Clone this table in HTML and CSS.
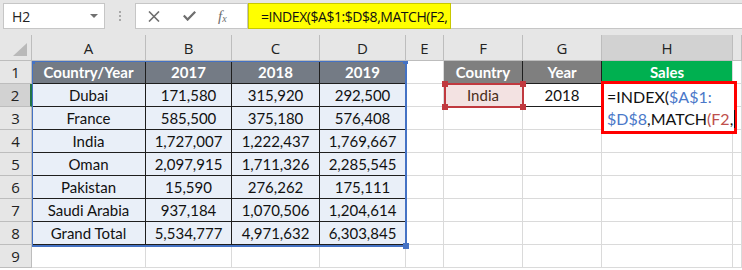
FILE: index.html
```html
<!DOCTYPE html>
<html>
<head>
<meta charset="utf-8">
<link rel="stylesheet" href="styles.css">
</head>
<body>
<div class="app">
  <div class="toolbar">
    <div class="namebox"><span>H2</span><span class="dd"></span></div>
    <div class="grip"><i></i><i></i><i></i></div>
    <div class="fbtns">
      <svg class="ic" width="12" height="11" viewBox="0 0 12 11"><path d="M1 0.5L11 10.5M11 0.5L1 10.5" stroke="#6e6e6e" stroke-width="1.6" fill="none"/></svg>
      <svg class="ic" width="13" height="10" viewBox="0 0 13 10"><path d="M0.8 4.6L4.6 8.6L12.2 0.8" stroke="#6e6e6e" stroke-width="2.2" fill="none"/></svg>
      <span class="fx">f<sub>x</sub></span>
    </div>
    <div class="fbar">
      <div class="fyellow">=INDEX($A$1:$D$8,MATCH(F2,</div>
      <div class="frest"></div>
    </div>
  </div>
  <div class="sheet">
    <div class="corner"><span class="tri"></span></div>
    <div class="ch">A</div><div class="ch">B</div><div class="ch">C</div><div class="ch">D</div><div class="ch">E</div><div class="ch">F</div><div class="ch">G</div><div class="ch active">H</div><div class="ch"></div>

    <div class="rh">1</div>
    <div class="c th">Country/Year</div><div class="c th">2017</div><div class="c th">2018</div><div class="c th">2019</div>
    <div class="c"></div><div class="c th2">Country</div><div class="c th2 gh">Year</div><div class="c th3">Sales</div><div class="c"></div>

    <div class="rh active">2</div>
    <div class="c td">Dubai</div><div class="c td">171,580</div><div class="c td">315,920</div><div class="c td">292,500</div>
    <div class="c"></div><div class="c lookup">India</div><div class="c yr">2018</div><div class="c"></div><div class="c"></div>

    <div class="rh">3</div>
    <div class="c td">France</div><div class="c td">585,500</div><div class="c td">375,180</div><div class="c td">576,408</div>
    <div class="c"></div><div class="c"></div><div class="c"></div><div class="c"></div><div class="c"></div>

    <div class="rh">4</div>
    <div class="c td">India</div><div class="c td">1,727,007</div><div class="c td">1,222,437</div><div class="c td">1,769,667</div>
    <div class="c"></div><div class="c"></div><div class="c"></div><div class="c"></div><div class="c"></div>

    <div class="rh">5</div>
    <div class="c td">Oman</div><div class="c td">2,097,915</div><div class="c td">1,711,326</div><div class="c td">2,285,545</div>
    <div class="c"></div><div class="c"></div><div class="c"></div><div class="c"></div><div class="c"></div>

    <div class="rh">6</div>
    <div class="c td">Pakistan</div><div class="c td">15,590</div><div class="c td">276,262</div><div class="c td">175,111</div>
    <div class="c"></div><div class="c"></div><div class="c"></div><div class="c"></div><div class="c"></div>

    <div class="rh">7</div>
    <div class="c td">Saudi Arabia</div><div class="c td">937,184</div><div class="c td">1,070,506</div><div class="c td">1,204,614</div>
    <div class="c"></div><div class="c"></div><div class="c"></div><div class="c"></div><div class="c"></div>

    <div class="rh">8</div>
    <div class="c td">Grand Total</div><div class="c td">5,534,777</div><div class="c td">4,971,632</div><div class="c td">6,303,845</div>
    <div class="c"></div><div class="c"></div><div class="c"></div><div class="c"></div><div class="c"></div>

    <div class="rh">9</div>
    <div class="c"></div><div class="c"></div><div class="c"></div><div class="c"></div>
    <div class="c"></div><div class="c"></div><div class="c"></div><div class="c"></div><div class="c"></div>

    <div class="range-blue"><i class="h tl"></i><i class="h tr"></i><i class="h br"></i></div>
    <div class="range-red"><i class="h tl"></i><i class="h tr"></i><i class="h bl"></i><i class="h br"></i></div>
    <div class="editor">=INDEX(<span class="rb">$A$1:</span><br><span class="rb">$D$8</span>,MATCH<span class="rr">(F2</span>,<span class="caret"></span></div>
  </div>
</div>
</body>
</html>
```

FILE: styles.css
```css
* { box-sizing: border-box; }
html, body { margin: 0; padding: 0; background: #fff; }
.app { width: 742px; height: 270px; overflow: hidden; }

.toolbar {
  height: 35px;
  background: #e6e6e6;
  display: flex;
  align-items: flex-start;
  padding: 3px 0 0 3px;
}
.namebox {
  flex: 0 0 102px; height: 26px;
  background: #fff;
  border: 1px solid #c6c6c6;
  display: flex; align-items: center; justify-content: space-between;
  padding: 0 6px 0 8px;
  font-family: "Open Sans", "Noto Sans", sans-serif;
  font-size: 14px; color: #222;
}
.dd {
  width: 0; height: 0;
  border-left: 4px solid transparent; border-right: 4px solid transparent;
  border-top: 4px solid #707070;
}
.grip {
  flex: 0 0 30px; height: 26px;
  display: flex; flex-direction: column; align-items: center; justify-content: center; gap: 2px;
}
.grip i { width: 2px; height: 2px; background: #a8a8a8; display: block; }
.fbtns {
  flex: 0 0 113px; height: 26px;
  background: #fff;
  border: 1px solid #c6c6c6;
  display: flex; align-items: center;
  padding-left: 12px; gap: 23px;
}
.fx {
  font-family: "Liberation Serif", "DejaVu Serif", serif;
  font-style: italic; font-size: 15px; color: #6e6e6e;
  margin-left: -1px;
}
.fx sub { font-size: 10px; vertical-align: -1px; }
.fbar { flex: 1 1 auto; min-width: 0; display: flex; height: 26px; }
.fyellow {
  flex: 0 0 203px; min-width: 0; overflow: hidden; height: 26px;
  background: #ffff00;
  border: 1px solid #c8c800;
  font-family: "Open Sans", "Noto Sans", sans-serif;
  font-size: 14px; color: #111;
  display: flex; align-items: center;
  padding-left: 12px;
  white-space: nowrap;
  letter-spacing: -0.45px;
}
.frest {
  flex: 1; height: 26px;
  background: #fff;
  border-top: 1px solid #c6c6c6;
  border-bottom: 1px solid #c6c6c6;
}

.sheet {
  position: relative;
  display: grid;
  grid-template-columns: 32px 114px 86px 88px 86px 38px 79px 79px 131px 1fr;
  grid-template-rows: 26px repeat(9, 23px);
  font-family: "Lato", "Liberation Sans", sans-serif;
  font-size: 15px;
}
.corner {
  background: #e6e6e6;
  border-right: 1px solid #bdbdbd; border-bottom: 1px solid #bdbdbd;
  position: relative;
}
.tri {
  position: absolute; right: 4px; bottom: 4px;
  width: 0; height: 0;
  border-left: 14px solid transparent;
  border-bottom: 13px solid #b9b9b9;
}
.ch {
  background: #e6e6e6;
  border-right: 1px solid #bdbdbd; border-bottom: 1px solid #bdbdbd;
  display: flex; align-items: center; justify-content: center;
  font-family: "Open Sans", "Noto Sans", sans-serif;
  font-size: 15px; color: #222;
  padding-top: 1px;
}
.ch.active { background: #d2d2d2; }
.rh {
  background: #e6e6e6;
  border-right: 1px solid #bdbdbd; border-bottom: 1px solid #bdbdbd;
  display: flex; align-items: center; justify-content: center;
  font-family: "Open Sans", "Noto Sans", sans-serif;
  font-size: 15px; color: #222;
}
.rh.active { background: #d2d2d2; border-right: 2px solid #217346; }

.c {
  border-right: 1px solid #dadada; border-bottom: 1px solid #dadada;
  display: flex; align-items: center; justify-content: center;
  color: #111;
  white-space: nowrap;
}
.th {
  background: #747b85; color: #fff; font-weight: 700;
  border-right: 1px solid #1e1e1e; border-bottom: 1px solid #1e1e1e;
}
.td {
  background: #e9eff8;
  border-right: 1px solid #1e1e1e; border-bottom: 1px solid #1e1e1e;
}
.th2 {
  background: #7f7f7f; color: #fff; font-weight: 700;
  border-right: 1px solid #1e1e1e; border-bottom: 1px solid #1e1e1e;
}
.th3 {
  background: #00b050; color: #fff; font-weight: 700;
  border-bottom: 1px solid #1e1e1e;
}
.lookup { background: #f3e2e2; color: #4a2d1a; }
.yr { border-right: 1px solid #1e1e1e; border-bottom: 1px solid #1e1e1e; }

.range-blue {
  position: absolute;
  left: 32px; top: 26px; width: 375px; height: 186px;
  border: 2px solid #4472c4; border-top-width: 1px; border-left-width: 1px;
  pointer-events: none;
}
.range-red {
  position: absolute;
  left: 444px; top: 48px; width: 80px; height: 25px;
  border: 2px solid #c0393f;
}
.h { position: absolute; width: 5px; height: 5px; display: block; }
.range-blue .h { background: #4472c4; }
.range-red .h { background: #c0393f; width: 6px; height: 6px; }
.range-blue .tl { left: -1px; top: -1px; width: 3px; height: 3px; }
.range-blue .tr { right: -3px; top: -1px; width: 5px; height: 3px; }
.range-blue .br { right: -4px; bottom: -4px; width: 6px; height: 6px; }
.range-red .tl { left: -4px; top: -4px; }
.range-red .tr { right: -4px; top: -4px; }
.range-red .bl { left: -4px; bottom: -4px; }
.range-red .br { right: -4px; bottom: -4px; }

.editor {
  position: absolute;
  left: 601px; top: 46px; width: 136px; height: 53px;
  background: #fff;
  border: 3px solid #ff0000;
  padding: 2px 0 0 3px;
  font-family: "Lato", "Liberation Sans", sans-serif;
  font-size: 16px; line-height: 22px; color: #111;
  white-space: nowrap;
}
.rb { color: #4a78c9; }
.rr { color: #c0504d; }
.caret { display: inline-block; width: 1px; height: 18px; background: #111; vertical-align: -3px; margin-left: 1px; }
```
